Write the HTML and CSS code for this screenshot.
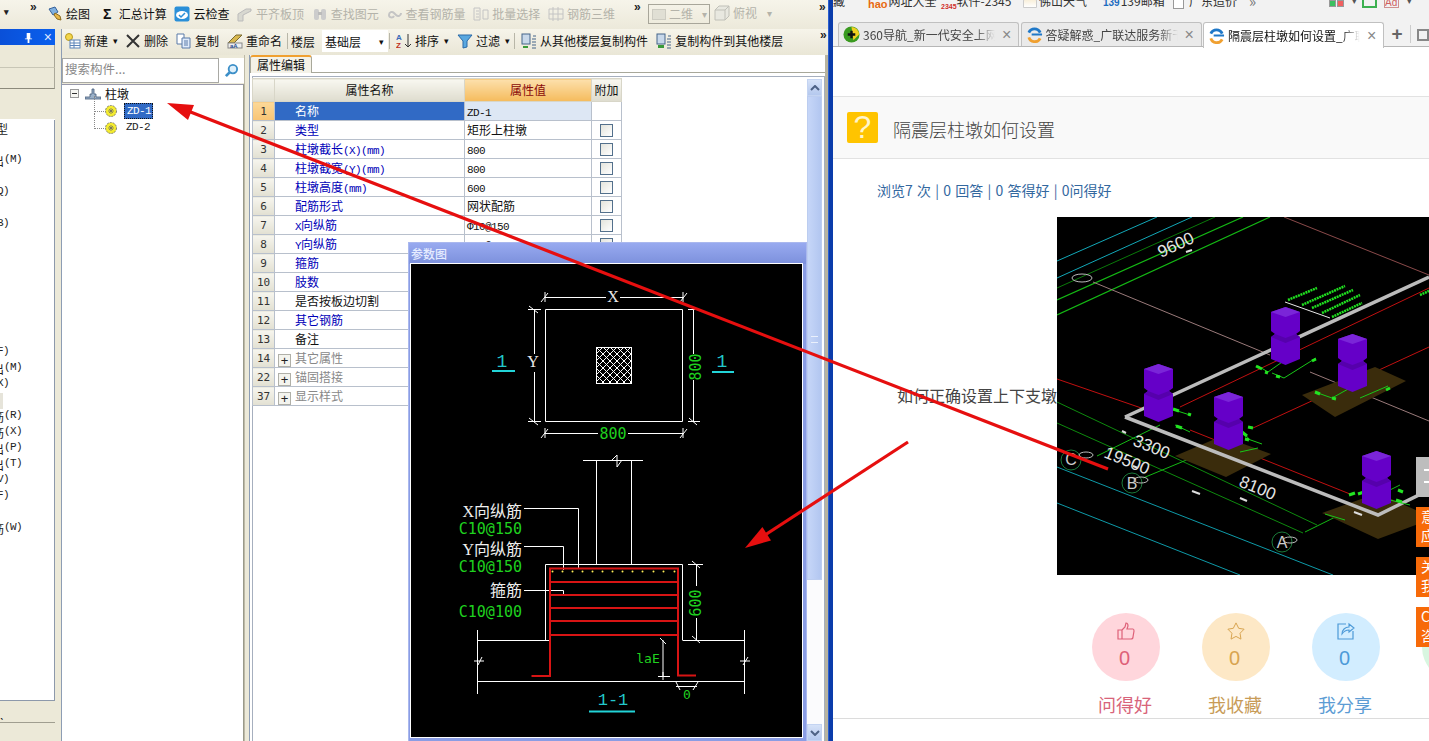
FILE: index.html
```html
<!DOCTYPE html>
<html lang="zh-CN">
<head>
<meta charset="utf-8">
<title>隔震层柱墩如何设置</title>
<link rel="stylesheet" href="styles.css">
</head>
<body>
<div class="desk">
  <section class="app">
    <div class="tb1">
      <span class="drop d0">▾</span><span class="more m0">»</span>
      <span class="it"><svg class="ic" viewBox="0 0 16 16"><path d="M2 3l6-2 3 5-5 3z" fill="#7fb0e0" stroke="#36619a"/><path d="M8 7l5 3 1 4-4-1-3-4z" fill="#e8b84a" stroke="#8a6a20"/></svg>绘图</span>
      <span class="it sig"><b class="sigma">Σ</b>汇总计算</span>
      <span class="it"><svg class="ic" viewBox="0 0 16 16"><rect x="0.5" y="0.5" width="15" height="15" rx="2" fill="#2a8fd8"/><ellipse cx="8" cy="9" rx="6" ry="4" fill="#fff"/><path d="M5 9l2 2 4-4" fill="none" stroke="#2a8fd8" stroke-width="1.5"/></svg>云检查</span>
      <span class="it off"><svg class="ic" viewBox="0 0 16 16"><path d="M1 15V8l8-5 5 0v2l-8 4v6z" fill="#d8d8d0" stroke="#bbb"/></svg>平齐板顶</span>
      <span class="it off"><svg class="ic" viewBox="0 0 16 16"><rect x="2" y="3" width="5" height="11" rx="2" fill="#ccc"/><rect x="9" y="3" width="5" height="11" rx="2" fill="#ccc"/><rect x="6" y="6" width="4" height="3" fill="#bbb"/></svg>查找图元</span>
      <span class="it off"><svg class="ic" viewBox="0 0 16 16"><path d="M2 9c0-3 3-4 5-2l2 2c2 2 5 1 5-2M2 9c0 3 4 3 5 1" fill="none" stroke="#c4c4c4" stroke-width="2"/></svg>查看钢筋量</span>
      <span class="it off"><svg class="ic" viewBox="0 0 16 16"><path d="M1 2h6v12H1zM3 5h3M3 8h3M3 11h3M10 4h5v9h-5z" fill="none" stroke="#c4c4c4"/></svg>批量选择</span>
      <span class="it off"><svg class="ic" viewBox="0 0 16 16"><path d="M1 3h14v10H1zM5 1v14M10 1v14M1 8h14" fill="none" stroke="#c4c4c4"/></svg>钢筋三维</span>
      <span class="more m1">»</span>
      <span class="combo off"><i class="swatch"></i>二维<i class="cd">▾</i></span>
      <span class="it off view"><svg class="ic" viewBox="0 0 16 16"><path d="M1 5l4-4h10v10l-4 4H1zM1 5h10v10M11 5l4-4" fill="#e8e8e0" stroke="#c0c0b8"/></svg>俯视<i class="cd2">▾</i></span>
      <span class="more m2">»</span>
    </div>
    <div class="work">
      <aside class="lcol">
        <div class="lhead"><svg class="pin" viewBox="0 0 10 12"><path d="M3 1h4v6h2v1H6v4H4V8H1V7h2z" fill="#fff"/></svg><span class="lx">×</span></div>
        <div class="lbtn b1"></div>
        <div class="lbtn b2"></div>
        <div class="lhd2"></div>
        <div class="llist">
          <div class="li s8">类型</div><div class="li"></div>
          <div class="li s22">输出<span class="m">(M)</span></div><div class="li"></div>
          <div class="li s9"><span class="m">(Q)</span></div><div class="li"></div>
          <div class="li s9"><span class="m">(B)</span></div>
          <div class="li"></div><div class="li"></div><div class="li"></div><div class="li"></div><div class="li"></div><div class="li"></div><div class="li"></div>
          <div class="li s9"><span class="m">(F)</span></div>
          <div class="li s22">输出<span class="m">(M)</span></div>
          <div class="li s9"><span class="m">(X)</span></div>
          <div class="li"><i class="lmark"></i></div>
          <div class="li s22">钢筋<span class="m">(R)</span></div>
          <div class="li s22">钢筋<span class="m">(X)</span></div>
          <div class="li s22">输出<span class="m">(P)</span></div>
          <div class="li s22">输出<span class="m">(T)</span></div>
          <div class="li s9"><span class="m">(V)</span></div>
          <div class="li s9"><span class="m">(F)</span></div>
          <div class="li"></div>
          <div class="li s22">钢筋<span class="m">(W)</span></div>
        </div>
        <div class="lfoot f1"><span class="fmark">ˎ</span></div>
        <div class="lfoot f2"></div>
      </aside>
      <div class="split s1"></div>
      <div class="rarea">
        <div class="tb2">
          <span class="it"><svg class="ic" viewBox="0 0 16 16"><circle cx="4" cy="4" r="3.5" fill="#f4d64a" stroke="#b89a20"/><rect x="5" y="7" width="10" height="8" fill="#fff" stroke="#5c84b8"/><path d="M5 10h10M5 12.500h10M9 7v8" stroke="#5c84b8" fill="none"/></svg>新建<i class="cd3">▾</i></span>
          <span class="it t-del"><svg class="ic x" viewBox="0 0 14 14"><path d="M1 1l12 12M13 1L1 13" stroke="#333" stroke-width="2"/></svg>删除</span>
          <span class="it"><svg class="ic" viewBox="0 0 16 16"><path d="M1 1h7v10H1z" fill="#fff" stroke="#5a7aa8"/><path d="M6 5h8v10H6z" fill="#dfeafa" stroke="#5a7aa8"/><path d="M8 8h4M8 10h4M8 12h4" stroke="#5a7aa8"/></svg>复制</span>
          <span class="it"><svg class="ic" viewBox="0 0 16 16"><path d="M1 10L9 2l6 0-8 8z" fill="#d8b850" stroke="#7a6a30"/><rect x="1" y="10" width="14" height="5" fill="#eee" stroke="#888"/><text class="abtxt" x="3" y="15">aA</text></svg>重命名</span>
          <i class="vl vl-a"></i>
          <span class="lb">楼层</span>
          <span class="floor">基础层<i class="cd4">▾</i></span>
          <i class="vl vl-b"></i>
          <span class="it"><svg class="ic" viewBox="0 0 16 16"><text class="az a" x="0" y="7">A</text><text class="az z" x="0" y="15">Z</text><path d="M12 1v13M9 11l3 3 3-3" fill="none" stroke="#333"/></svg>排序<i class="cd3">▾</i></span>
          <span class="it"><svg class="ic" viewBox="0 0 16 16"><path d="M1 2h14L10 8v6l-4 1V8z" fill="#5aa8e0" stroke="#2a6aa8"/></svg>过滤<i class="cd3">▾</i></span>
          <i class="vl vl-c"></i>
          <span class="it"><svg class="ic" viewBox="0 0 16 16"><rect x="1" y="1" width="8" height="10" fill="#c8d8ea" stroke="#44658a"/><path d="M2 13h5v2H2z" fill="#3a9a3a"/><path d="M11 6h4M11 9h4M11 12h4M11 15h4M12 3h3" stroke="#44658a"/></svg>从其他楼层复制构件</span>
          <span class="it"><svg class="ic" viewBox="0 0 16 16"><rect x="1" y="1" width="8" height="10" fill="#c8d8ea" stroke="#44658a"/><path d="M2 12h6v3H2z" fill="#3a9a3a"/><path d="M11 6h4M11 9h4M11 12h4M11 15h4M12 3h3" stroke="#44658a"/></svg>复制构件到其他楼层</span>
          <span class="more m3">»</span>
        </div>
        <div class="main">
          <div class="mid">
            <div class="search"><span class="sinput">搜索构件...</span><span class="sbtn"><svg class="mag" viewBox="0 0 16 16"><circle cx="9.500" cy="6.500" r="4.500" fill="#dff0fb" stroke="#3c8fc8" stroke-width="2"/><path d="M6 10l-4 4" stroke="#3c8fc8" stroke-width="3"/></svg></span></div>
            <div class="tree">
              <div class="node root"><i class="minus"></i><svg class="nic" viewBox="0 0 16 12"><path d="M0 11h16v-2H11V6H9V1H7v5H5v3H0z" fill="#9ab0c8" stroke="#445a78" stroke-width=".8"/></svg>柱墩</div>
              <div class="node kid"><i class="dots"></i><svg class="gear" viewBox="0 0 12 12"><circle cx="6" cy="6" r="5.500" fill="#f4ec30" stroke="#666" stroke-width=".8" stroke-dasharray="2 1"/><path d="M3 6h6M6 3v6M4 4l4 4M8 4l-4 4" stroke="#666" stroke-width=".7"/></svg><span class="zd sel">ZD-1</span></div>
              <div class="node kid"><i class="dots"></i><svg class="gear" viewBox="0 0 12 12"><circle cx="6" cy="6" r="5.500" fill="#f4ec30" stroke="#666" stroke-width=".8" stroke-dasharray="2 1"/><path d="M3 6h6M6 3v6M4 4l4 4M8 4l-4 4" stroke="#666" stroke-width=".7"/></svg><span class="zd">ZD-2</span></div>
            </div>
          </div>
          <div class="split s2"></div>
          <div class="props">
            <div class="tabs"><span class="ptab">属性编辑</span></div>
            <div class="pbody">
              <div class="tablewrap">
                <table class="grid">
                  <colgroup><col class="c0"><col class="c1"><col class="c2"><col class="c3"></colgroup>
                  <thead><tr><th class="n"></th><th>属性名称</th><th class="hv">属性值</th><th>附加</th></tr></thead>
                  <tbody>
                    <tr class="cur"><td class="n">1</td><td class="k">名称</td><td class="v"><span class="m">ZD-1</span></td><td></td></tr>
                    <tr><td class="n">2</td><td class="k bl">类型</td><td class="v">矩形上柱墩</td><td><i class="cb"></i></td></tr>
                    <tr><td class="n">3</td><td class="k bl">柱墩截长<span class="m">(X)(mm)</span></td><td class="v"><span class="m">800</span></td><td><i class="cb"></i></td></tr>
                    <tr><td class="n">4</td><td class="k bl">柱墩截宽<span class="m">(Y)(mm)</span></td><td class="v"><span class="m">800</span></td><td><i class="cb"></i></td></tr>
                    <tr><td class="n">5</td><td class="k bl">柱墩高度<span class="m">(mm)</span></td><td class="v"><span class="m">600</span></td><td><i class="cb"></i></td></tr>
                    <tr><td class="n">6</td><td class="k bl">配筋形式</td><td class="v">网状配筋</td><td><i class="cb"></i></td></tr>
                    <tr><td class="n">7</td><td class="k bl"><span class="m">X</span>向纵筋</td><td class="v"><span class="m">Φ10@150</span></td><td><i class="cb"></i></td></tr>
                    <tr><td class="n">8</td><td class="k bl"><span class="m">Y</span>向纵筋</td><td class="v"><span class="m">Φ10@150</span></td><td><i class="cb"></i></td></tr>
                    <tr><td class="n">9</td><td class="k bl">箍筋</td><td class="v"></td><td></td></tr>
                    <tr><td class="n">10</td><td class="k bl">肢数</td><td class="v"></td><td></td></tr>
                    <tr><td class="n">11</td><td class="k">是否按板边切割</td><td class="v"></td><td></td></tr>
                    <tr><td class="n">12</td><td class="k bl">其它钢筋</td><td class="v"></td><td></td></tr>
                    <tr><td class="n">13</td><td class="k">备注</td><td class="v"></td><td></td></tr>
                    <tr><td class="n">14</td><td class="k gr"><i class="plus">+</i>其它属性</td><td class="v"></td><td></td></tr>
                    <tr><td class="n">22</td><td class="k gr"><i class="plus">+</i>锚固搭接</td><td class="v"></td><td></td></tr>
                    <tr><td class="n">37</td><td class="k gr"><i class="plus">+</i>显示样式</td><td class="v"></td><td></td></tr>
                  </tbody>
                </table>
              </div>
              <div class="vbar">
                <span class="vbtn"><svg class="chev" viewBox="0 0 10 6"><path d="M1 5l4-4 4 4" fill="none" stroke="#4d6185" stroke-width="2"/></svg></span>
                <span class="vthumb"><i class="grip"></i></span>
                <span class="vtrack"></span>
                <span class="vbtn"><svg class="chev" viewBox="0 0 10 6"><path d="M1 1l4 4 4-4" fill="none" stroke="#4d6185" stroke-width="2"/></svg></span>
              </div>
            </div>
          </div>
        </div>
      </div>
    </div>
  </section>
  <div class="sep"></div>
  <section class="browser">
    <div class="marks">
      <span class="bm bm0">藏</span>
      <span class="bm bm1"><b class="hao">hao</b>网址大全</span>
      <span class="bm bm2"><b class="n2345">2345</b>软件-2345</span>
      <span class="bm bm3"><i class="cloudic"></i>佛山天气</span>
      <span class="bm bm4"><b class="m139">139</b>139邮箱</span>
      <span class="bm bm5"><i class="pageic"></i>广东造价</span>
      <span class="bm bm6">»</span>
      <span class="tools"><i class="sq g"></i><i class="sq r"></i><i class="tcd">▾</i><i class="book"></i><i class="adbox">Ad</i><i class="tcd">▾</i></span>
    </div>
    <div class="btabs">
      <div class="btab"><svg class="fav" viewBox="0 0 18 18"><circle cx="9" cy="9" r="8.500" fill="#3a9a20"/><path d="M9 1a8 8 0 0 1 8 8l-6 6z" fill="#f0d020"/><path d="M9 5v8M5 9h8" stroke="#111" stroke-width="2.500"/></svg><span class="tt">360导航_新一代安全上网</span><span class="tx">×</span></div>
      <div class="btab"><svg class="fav" viewBox="0 0 18 18"><path d="M3 7a6.500 6.500 0 0 1 12 0" fill="none" stroke="#1f78c8" stroke-width="3"/><path d="M3 12a6.500 6.500 0 0 0 12 1" fill="none" stroke="#f0a030" stroke-width="3"/><path d="M6 9h11" stroke="#1f78c8" stroke-width="2"/></svg><span class="tt">答疑解惑_广联达服务新干</span><span class="tx">×</span></div>
      <div class="btab on"><svg class="fav" viewBox="0 0 18 18"><path d="M3 7a6.500 6.500 0 0 1 12 0" fill="none" stroke="#1f78c8" stroke-width="3"/><path d="M3 12a6.500 6.500 0 0 0 12 1" fill="none" stroke="#f0a030" stroke-width="3"/><path d="M6 9h11" stroke="#1f78c8" stroke-width="2"/></svg><span class="tt">隔震层柱墩如何设置_广联</span><span class="tx">×</span></div>
      <span class="tplus">+</span><i class="tline"></i><i class="tdup"></i>
    </div>
    <div class="page">
      <div class="qband">
        <span class="qic">?</span>
        <h1 class="qtitle">隔震层柱墩如何设置</h1>
      </div>
      <p class="stats">浏览7 次 | 0 回答 | 0 答得好 | 0问得好</p>
      <div class="qbody">
        <p class="qtext">如何正确设置上下支墩</p>
        <svg class="cad" viewBox="1057 217 372 358">
          <defs>
            <g id="pil">
              <path d="M0 24V5L14.500 0 29 5v19L25 27l4 3v22l-14.500 6L0 52V30l4-3z" fill="#6500c8"/>
              <path d="M0 5L14.500 0 29 5 14.500 10z" fill="#7a25d8"/>
              <path d="M0 30l14.500 6L29 30l-4-3-10.500 4L4 27z" fill="#5600ac"/>
            </g>
          </defs>
          <rect x="1057" y="217" width="372" height="358" fill="#000"/>
          <path d="M1057 261L1157 217M1057 278L1192 217" stroke="#12a8b8" fill="none"/>
          <path d="M1057 288L1215 217" stroke="#0a7a0a" fill="none"/>
          <path d="M1057 300L1243 217M1057 315L1270 217" stroke="#14b814" stroke-width="1.200" fill="none"/>
          <path d="M1057 467L1333 575M1057 503L1240 575" stroke="#0e9aa8" fill="none"/>
          <path d="M1057 402L1317 525M1057 423L1303 533" stroke="#0e8a0e" fill="none"/>
          <path d="M1093 282L1270 355M1310 372L1429 421" stroke="#9a7a7a" fill="none"/>
          <path d="M1284 217L1429 275" stroke="#8a4a4a" fill="none"/>
          <path d="M1057 379L1150 411M1190 430L1350 494" stroke="#c01010" fill="none"/>
          <path d="M1180 407L1429 288M1253 428L1429 347" stroke="#c01010" fill="none"/>
          <path d="M1097 456L1160 425M1143 478L1230 442M1305 532L1400 485" stroke="#14b814" fill="none"/>
          <path d="M1302 395L1375 367L1406 381L1335 417zM1175 456L1222 436L1271 454L1226 477zM1322 513L1378 493L1429 516V520L1378 539z" fill="#3a2c0c"/>
          <path d="M1125 417L1378 515L1429 490M1125 417L1429 277" fill="none" stroke="#bcbcbc" stroke-width="3.500"/>
          <path d="M1285 302L1330 318" stroke="#e8e8e8"/>
          <path class="db" d="M1288 300L1317 288M1302 305L1345 286M1312 308L1353 290M1322 313L1360 295M1332 317L1362 303M1420 295L1429 291"/>
          <g class="dg">
            <path d="M1258 366L1268 372L1285 360M1272 373L1284 378L1316 358M1315 392L1332 398L1350 388M1360 398L1388 386M1168 408L1190 415M1175 425L1190 432M1241 430L1250 440M1245 438L1262 444M1240 452L1258 448M1325 514L1345 520M1390 500L1410 505"/>
          </g>
          <path class="db2" d="M1256 366l6 3M1265 372l3 1M1276 376l4 1M1312 361l4-2M1315 392l5 2M1332 398l4 1M1386 390l4-2M1173 409l6 2M1188 414l3 1M1176 426l6 2M1242 432l5 4M1245 439l4 1M1248 427l5 1M1349 495l6-2M1358 494l6-2M1398 490l5 2M1396 500l6 2"/>
          <use href="#pil" x="1271" y="307"/>
          <use href="#pil" x="1338" y="334"/>
          <use href="#pil" x="1144" y="364"/>
          <use href="#pil" x="1214" y="392"/>
          <use href="#pil" x="1362" y="451"/>
          <g class="gc">
            <circle cx="1071" cy="460" r="10"/><circle cx="1132" cy="483" r="10"/><circle cx="1282" cy="542" r="10"/>
          </g>
          <g class="wc">
            <ellipse cx="1082" cy="278" rx="10" ry="4"/><ellipse cx="1141" cy="480" rx="7" ry="3"/><ellipse cx="1290" cy="540" rx="7" ry="3"/><ellipse cx="1086" cy="455" rx="7" ry="3"/>
          </g>
          <text class="gl" x="1071" y="465" text-anchor="middle">C</text>
          <text class="gl" x="1132" y="489" text-anchor="middle">B</text>
          <text class="gl" x="1282" y="548" text-anchor="middle">A</text>
          <text class="cadt" transform="translate(1161 258) rotate(-25)">9600</text>
          <text class="cadt" transform="translate(1132 445) rotate(22)">3300</text>
          <text class="cadt" transform="translate(1103 457) rotate(22)">19500</text>
          <text class="cadt" transform="translate(1238 486) rotate(22)">8100</text>
          <path d="M1122 431l4 2M1192 491l8 3M1240 498l7 3M1354 512l8 3M1133 466l5 2M1186 252l6-2" stroke="#ddd" stroke-width="2"/>
        </svg>
      </div>
      <div class="acts">
        <div class="act pk">
          <div class="circle"><svg class="aic" viewBox="0 0 18 18"><path d="M1 8h4v9H1zM5 8l3-3 1-4c2 0 2 2 2 3l-1 3h6c1 0 1 1 1 2l-1 6c0 1-1 2-2 2H5" fill="none" stroke="currentColor" stroke-width="1.200"/></svg><span class="cnt">0</span></div>
          <span class="lab">问得好</span>
        </div>
        <div class="act or">
          <div class="circle"><svg class="aic" viewBox="0 0 20 20"><path d="M10 1l3 6 6 1-4.500 4.500 1 6.500-5.500-3-5.500 3 1-6.500L1 8l6-1z" fill="none" stroke="currentColor" stroke-width="1.100"/></svg><span class="cnt">0</span></div>
          <span class="lab">我收藏</span>
        </div>
        <div class="act bu">
          <div class="circle"><svg class="aic" viewBox="0 0 18 18"><path d="M9 2H1v15h15V9" fill="none" stroke="currentColor" stroke-width="1.200"/><path d="M5 12c0-4 3-7 7-7V2l5 4-5 4V8c-3 0-5 1-7 4z" fill="none" stroke="currentColor" stroke-width="1.100"/></svg><span class="cnt">0</span></div>
          <span class="lab">我分享</span>
        </div>
        <div class="act gn">
          <div class="circle"></div>
          <span class="lab">我</span>
        </div>
      </div>
      <div class="rule"></div>
    </div>
  </section>

  <div class="dialog">
    <div class="dtitle">参数图</div>
    <svg class="dcanvas" viewBox="411 264 391 473">
      <defs>
        <pattern id="hat" width="7" height="7" patternUnits="userSpaceOnUse" x="596" y="347">
          <path d="M0 0L7 7M7 0L0 7" stroke="#fff" stroke-width="1"/>
        </pattern>
      </defs>
      <g class="wl">
        <path d="M545.500 309.500H682.500V421.500H545.500Z"/>
        <path d="M545 297.500H606M620 297.500H683M545 292V302M683 292V302M541 302L548 293M680 302L687 293"/>
        <path d="M534.500 309V354M534.500 372V421M528 309.500H541M528 421.500H541M529 306L538 313M529 418L538 425"/>
        <path d="M693.500 309V354M693.500 380V421M688 309.500H700M688 421.500H700M689 418L697 425"/>
        <path d="M545 433.500H598M628 433.500H683M545 428V438M683 428V438M541 438L548 429M680 438L687 429"/>
        <rect x="596.500" y="347.500" width="35" height="36" fill="url(#hat)"/>
        <path d="M583 460.500H643M596.500 460.500V564.500M631.500 460.500V564.500M612 460L617 455V467L622 460"/>
        <path d="M545.500 564.500H682.500M545.500 564.500V640.500M682.500 564.500V640.500"/>
        <path d="M477 640.500H550M683 640.500H744M477 681.500H744M477.500 630V694M744.500 630V694"/>
        <path d="M474 661H484M478 665L482 657M740 661H750M743 665L748 657"/>
        <path d="M524 508.500H578.500V568M524 546.500H563.500V570M524 590.500H563.500V595"/>
        <path d="M696.500 564V586M696.500 618V640M688 564.500H703M692 561L700 568M692 636L700 643"/>
        <path d="M663 640V676M658 676.500H670M663 672V680M660 638L666 644"/>
        <path d="M676 686.500H697M676 682L680 690M693 690L698 682"/>
      </g>
      <path class="rb" d="M531.500 676H550V568.500H678V675.500H696"/>
      <path class="rb" d="M550 582H678M550 595H678M550 608H678M550 621H678M550 635H678"/>
      <g class="dots2">
        <circle cx="552.500" cy="571.500" r="1"/><circle cx="562.500" cy="571.500" r="1"/><circle cx="572.500" cy="571.500" r="1"/><circle cx="582.500" cy="571.500" r="1"/><circle cx="592.500" cy="571.500" r="1"/><circle cx="602.500" cy="571.500" r="1"/><circle cx="612.500" cy="571.500" r="1"/><circle cx="622.500" cy="571.500" r="1"/><circle cx="632.500" cy="571.500" r="1"/><circle cx="642.500" cy="571.500" r="1"/><circle cx="653.500" cy="571.500" r="1"/><circle cx="663.500" cy="571.500" r="1"/><circle cx="674.500" cy="571.500" r="1"/>
      </g>
      <text class="tw" x="613" y="302" text-anchor="middle">X</text>
      <text class="tw" x="533" y="367" text-anchor="middle">Y</text>
      <text class="tg" x="613" y="439" text-anchor="middle">800</text>
      <text class="tg" transform="translate(701 367) rotate(-90)" text-anchor="middle">800</text>
      <text class="tg" transform="translate(701 603) rotate(-90)" text-anchor="middle">600</text>
      <text class="tc" x="502" y="367" text-anchor="middle">1</text>
      <text class="tc" x="722" y="367" text-anchor="middle">1</text>
      <path class="cl" d="M492 371H515M712 372H734M589 711.500H635"/>
      <text class="tc s11" x="613" y="705" text-anchor="middle">1-1</text>
      <text class="tz" x="522" y="517" text-anchor="end">X向纵筋</text>
      <text class="tg" x="522" y="534" text-anchor="end">C10@150</text>
      <text class="tz" x="522" y="555" text-anchor="end">Y向纵筋</text>
      <text class="tg" x="522" y="572" text-anchor="end">C10@150</text>
      <text class="tz" x="522" y="596" text-anchor="end">箍筋</text>
      <text class="tg" x="522" y="617" text-anchor="end">C10@100</text>
      <text class="tg sm" x="648" y="663" text-anchor="middle">laE</text>
      <text class="tg sm" x="687" y="699" text-anchor="middle">0</text>
    </svg>
  </div>

  <div class="floats">
    <div class="fl gy"><i></i><i></i></div>
    <div class="fl oj">意<br>应</div>
    <div class="fl oj">关<br>我</div>
    <div class="fl oj">C<br>咨</div>
  </div>

  <svg class="arrows" viewBox="0 0 1429 741">
    <path d="M1108 469L188 111" stroke="#e60f0f" stroke-width="3.200" fill="none"/>
    <path d="M167 103L194 105L188 120Z" fill="#e60f0f"/>
    <path d="M908 442L765 535" stroke="#e60f0f" stroke-width="3.200" fill="none"/>
    <path d="M745 548L771 540.500L762.400 527Z" fill="#e60f0f"/>
  </svg>
</div>
</body>
</html>
```
FILE: styles.css
```css
* { box-sizing: border-box; }
html, body { margin: 0; padding: 0; background: #fff; }
body { font: 12px "Noto Sans CJK SC", "Liberation Sans", sans-serif; color: #111; }
i { font-style: normal; display: inline-block; }
.desk { position: relative; display: flex; width: 1429px; height: 741px; overflow: hidden; }
.m { font: 11px "Liberation Mono", "DejaVu Sans Mono", monospace; letter-spacing: -.6px; }

/* left application */
.app { width: 828px; display: flex; flex-direction: column; background: #ece9d8; }
.tb1 { height: 29px; display: flex; align-items: center; padding: 0 0 2px 47px; gap: 7.700px; position: relative; background: linear-gradient(#f6f4ea, #ece9da); line-height: 16px; }
.it { display: flex; align-items: center; gap: 3px; white-space: nowrap; line-height: 16px; }
.ic { width: 16px; height: 16px; flex: none; }
.ic.x { width: 14px; height: 14px; margin-right: 1px; }
.off { color: #b4b3aa; }
.sig { margin-left: 3px; gap: 5px; }
.sigma { font: bold 14px "Liberation Sans", sans-serif; width: 13px; text-align: center; }
.drop, .more { position: absolute; font: bold 12px "Liberation Sans", sans-serif; color: #222; }
.d0 { left: 4px; top: 7px; font-size: 9px; }
.m0 { left: 30px; top: 0; }
.m1 { left: 634px; top: 0; }
.m2 { left: 819px; top: 0; }
.m3 { left: 758px; top: -1px; }
.combo { position: absolute; left: 648px; top: 4px; width: 62px; height: 20px; border: 1px solid #a8a69a; display: flex; align-items: center; padding-left: 3px; gap: 3px; }
.swatch { width: 14px; height: 11px; background: #e0dfd4; border: 1px solid #cdccc2; }
.cd { margin-left: 6px; font-size: 10px; }
.view { position: absolute; left: 714px; top: 5px; }
.cd2 { margin-left: 7px; font-size: 10px; }
.work { flex: 1; display: flex; min-height: 0; }

.lcol { width: 55px; display: flex; flex-direction: column; overflow: hidden; }
.lhead { height: 16px; background: linear-gradient(90deg, #0a50d8, #0a60ee); display: flex; align-items: center; justify-content: flex-end; gap: 11px; padding-right: 3px; }
.pin { width: 9px; height: 11px; }
.lx { color: #dfe8ff; font: 14px "Liberation Sans", sans-serif; line-height: 14px; }
.lbtn { background: #ece9d8; border-right: 1px solid #aaa89a; border-bottom: 1px solid #8c8a7c; }
.b1 { height: 23px; border-bottom-color: #c8c6b6; }
.b2 { height: 21px; }
.lhd2 { height: 28px; margin-top: 3px; background: #ece9d8; border-bottom: 1px solid #fff; }
.llist { flex: 1; min-height: 0; background: #fff; border-right: 1px solid #8d99ab; border-bottom: 1px solid #8d99ab; padding-top: 1px; }
.li { height: 16px; line-height: 16px; overflow: hidden; white-space: nowrap; display: flex; justify-content: flex-end; color: #222; width: 0; }
.s8 { width: 8px; }
.s9 { width: 9px; }
.s22 { width: 22px; }
.lmark { width: 3px; height: 16px; background: #e6e4da; }
.li:has(.lmark) { width: 3px; }
.lfoot { background: #ece9d8; position: relative; }
.f1 { height: 22px; border-bottom: 1px solid #a09e90; }
.f2 { height: 18px; }
.fmark { position: absolute; left: 0; top: 2px; font-size: 12px; }
.split { background: #ece9d8; flex: none; }
.s1 { width: 7px; border-right: 1px solid #8d9db4; }
.rarea { flex: 1; display: flex; flex-direction: column; min-width: 0; }
.tb2 { height: 26px; display: flex; align-items: center; padding: 0 0 2px 3px; gap: 8px; position: relative; background: linear-gradient(#f6f4ea, #e9e6d6); flex: none; }
.tb2 .it { gap: 3px; }
.cd3 { margin-left: 2px; font-size: 9px; }
.vl { width: 1px; height: 16px; background: #b8b6a8; flex: none; }
.vl-a { margin-left: -3px; }
.lb { margin-left: -5px; }
.floor { width: 66px; height: 22px; background: #fff; display: flex; align-items: center; padding-left: 3px; margin-left: -1px; }
.vl-b { margin-left: -7px; margin-right: -2px; }
.vl-c { margin-left: -4px; margin-right: -2px; }
.cd4 { margin-left: 18px; font-size: 9px; }
.abtxt { font: bold 6px "Liberation Sans", sans-serif; fill: #2a4a90; }
.az { font: bold 8px "Liberation Sans", sans-serif; }
.az.a { fill: #3a6ab8; }
.az.z { fill: #c03020; }
.main { flex: 1; display: flex; min-height: 0; }
.mid { width: 182px; display: flex; flex-direction: column; flex: none; background: #ece9d8; }
.search { height: 29px; padding-top: 3px; display: flex; flex: none; }
.sinput { width: 157px; height: 25px; background: #fff; border: 1px solid #a9a9a4; color: #888; line-height: 20px; padding-left: 2px; font-size: 12.500px; }
.sbtn { width: 25px; height: 25px; background: #fff; display: flex; align-items: center; justify-content: center; }
.mag { width: 15px; height: 15px; }
.tree { flex: 1; background: #fff; border-top: 1px solid #99a; border-right: 1px solid #9a9a8a; position: relative; }
.node { display: flex; align-items: center; height: 16.500px; white-space: nowrap; }
.root { padding-left: 8px; height: 17.500px; line-height: 14px; }
.minus { width: 9px; height: 9px; border: 1px solid #999; background: linear-gradient(90deg, transparent 1px, #333 1px, #333 6px, transparent 6px) center / 100% 1px no-repeat #f6f6f2; }
.nic { width: 16px; height: 12px; margin: 0 4px 0 6px; }
.kid { padding-left: 32px; height: 17px; }
.dots { width: 10px; height: 16px; border-left: 1px dotted #888; border-bottom: 1px dotted #888; margin-top: -15px; }
.gear { width: 12px; height: 12px; margin-left: 1px; }
.zd { font: 11px "Liberation Mono", monospace; letter-spacing: -.6px; margin-left: 7px; width: 29px; height: 16px; line-height: 14px; padding-left: 2px; color: #222; }
.sel { background: #316ac5; color: #fff; border: 1px dotted #111; }
.s2 { width: 6px; border-left: 1px solid #bdb9a6; border-right: 1px solid #8d9db4; }
.props { flex: 1; display: flex; flex-direction: column; min-width: 0; background: #fff; border-right: 3px solid #b8b4a0; }
.tabs { height: 18px; border-bottom: 1px solid #a8a89a; flex: none; position: relative; }
.ptab { position: absolute; left: 0; top: 0; width: 62px; height: 18px; background: #f4f2e8; border: 1px solid #a8a89a; border-top: 2px solid #f0a030; border-bottom: 0; border-radius: 3px 3px 0 0; text-align: center; line-height: 15px; }
.pbody { flex: 1; min-height: 0; display: flex; margin: 3px 0 0 2px; border: 1px solid #a6afbe; border-bottom: 0; }
.tablewrap { flex: 1; min-width: 0; padding-top: 1px; }
.grid { border-collapse: collapse; table-layout: fixed; width: 369px; margin-left: -1px; }
.c0 { width: 22px; }
.c1 { width: 190px; }
.c2 { width: 127px; }
.c3 { width: 30px; }
.grid th, .grid td { height: 19px; padding: 0; border: 1px solid #b8c0cc; font-weight: 400; white-space: nowrap; overflow: hidden; line-height: 16px; }
.grid thead th { height: 23px; background: linear-gradient(#f8f7f0, #dedcce); border-color: #d8d6c8; text-align: center; }
.grid th.hv { background: linear-gradient(#fce0ac, #f5bb5c); color: #8a0a0a; }
.grid td.n { background: linear-gradient(#f6f5ee, #e2e0d2); text-align: center; color: #333; font: 11px "DejaVu Sans Mono", monospace; }
.k { padding-left: 20px !important; }
.bl { color: #0000b8; }
.gr { color: #888; padding-left: 3px !important; }
.v { padding-left: 2px !important; }
.plus { width: 13px; height: 13px; border: 1px solid #b0b0a8; background: #f4f4ee; color: #222; text-align: center; margin-right: 4px; vertical-align: -2px; font: 13px/11px "Liberation Sans", sans-serif; }
.cur td.k { background: #316ac5; color: #fff; }
.cur td.n { background: linear-gradient(#fcd898, #f8c474); }
.cur td.v { background: #dde7f4; }
.cb { display: block; width: 13px; height: 13px; margin: 0 auto; border: 1px solid #53708c; background: linear-gradient(135deg, #e4e4dc, #fff); }
.vbar { width: 15px; margin-right: 2px; margin-top: 2px; display: flex; flex-direction: column; flex: none; }
.vbtn { height: 17px; background: linear-gradient(#d6e2f8, #b4c8ee); border: 1px solid #c4d4f2; display: flex; align-items: center; justify-content: center; flex: none; }
.chev { width: 10px; height: 6px; }
.vthumb { height: 484px; background: linear-gradient(90deg, #c6d6f8, #b2c6f0); border: 1px solid #bccdf0; flex: none; position: relative; }
.grip { position: absolute; left: 3px; top: 239px; width: 7px; height: 7px; border-top: 1px solid #eaf0fc; border-bottom: 1px solid #eaf0fc; }
.vtrack { flex: 1; background: #fbfbfd; }
.sep { width: 5px; flex: none; background: #0b3cab; border-left: 1px solid #2b5fd0; }

/* browser */
.browser { flex: 1; min-width: 0; display: flex; flex-direction: column; background: #fff; }
.marks { height: 20px; background: #f2f2f2; display: flex; position: relative; overflow: hidden; color: #333; font-size: 12px; line-height: 14px; flex: none; }
.bm { position: absolute; top: -6px; white-space: nowrap; display: flex; align-items: flex-start; }
.bm0 { left: 0; }
.bm1 { left: 35px; gap: 1px; }
.hao { color: #e86a10; font: bold 11px/11px "Liberation Sans", sans-serif; margin-top: 5px; }
.bm2 { left: 108px; }
.n2345 { color: #d0302a; font: bold 7px/8px "Liberation Sans", sans-serif; margin-top: 9px; }
.bm3 { left: 190px; gap: 2px; }
.cloudic { width: 14px; height: 14px; margin-top: 0; background: linear-gradient(#f4e4c0, #fff); border: 1px solid #ccc; border-radius: 50% 50% 0 0; }
.bm4 { left: 270px; gap: 0; }
.m139 { color: #1c6cc0; font: bold 10px/10px "Liberation Sans", sans-serif; margin: 4px 1px 0 0; }
.bm5 { left: 340px; gap: 5px; }
.pageic { width: 11px; height: 15px; margin-top: 0; border: 1px solid #999; background: #fff; }
.bm6 { left: 416px; color: #777; font-size: 15px; }
.tools { position: absolute; left: 496px; top: 0; display: flex; gap: 1px; align-items: flex-start; }
.sq { width: 7px; height: 7px; margin-top: 0; border: 1px solid #999; }
.sq.g { background: #3cc060; }
.sq.r { background: #f06060; }
.tcd { font-size: 9px; margin: -6px 4px 0 7px; color: #555; }
.book { width: 15px; height: 8px; border: 2px solid #3cb050; border-top: 0; }
.adbox { width: 15px; height: 8px; border: 1px solid #d09090; border-top: 0; color: #d06060; font: 10px/6px "Liberation Sans", sans-serif; margin-left: 6px; overflow: hidden; }
.btabs { height: 27px; display: flex; background: #f2f2f2; border-bottom: 1px solid #b6b6b6; padding: 2px 0 0 5px; gap: 1.500px; align-items: stretch; position: relative; flex: none; }
.btab { width: 181px; flex: none; background: #eaeaea; border: 1px solid #c0c0c0; border-bottom: 0; border-radius: 3px 3px 0 0; display: flex; align-items: center; padding-left: 4px; overflow: hidden; font-size: 12px; color: #444; }
.btab.on { background: #fff; color: #111; height: 26px; }
.fav { width: 17px; height: 17px; flex: none; margin-right: 3px; }
.tt { flex: none; width: 132px; overflow: hidden; white-space: nowrap; -webkit-mask-image: linear-gradient(90deg, #000 85%, transparent); mask-image: linear-gradient(90deg, #000 85%, transparent); }
.tx { margin-left: 7px; color: #888; font: 16px "Liberation Sans", sans-serif; }
.tplus { margin-left: 6px; color: #666; font: bold 19px/24px "Liberation Sans", sans-serif; }
.tline { width: 1px; height: 18px; background: #ccc; margin: 3px 0 0 6px; }
.tdup { width: 12px; height: 12px; border: 2px solid #888; margin: 7px 0 0 4px; }
.page { flex: 1; min-height: 0; display: flex; flex-direction: column; }
.qband { margin-top: 49px; height: 63px; background: #f9f9f9; border-top: 1px solid #e2e2e2; border-bottom: 1px solid #e2e2e2; display: flex; align-items: center; padding-left: 14px; flex: none; }
.qic { width: 31px; height: 31px; border-radius: 2px; background: #ffc400; color: #fff5cc; font: 32px/31px "Liberation Sans", sans-serif; text-align: center; }
.qtitle { margin: 3px 0 0 15px; font-size: 18px; font-weight: 300; color: #444; }
.stats { margin: 21px 0 0 44px; font-size: 14px; line-height: 20px; color: #33689f; height: 20px; flex: none; word-spacing: 1.100px; }
.qbody { display: flex; margin: 17px 0 0 64px; flex: none; height: 358px; align-items: flex-start; }
.qtext { margin: 168px 0 0 0; width: 160px; height: 24px; font-size: 16px; line-height: 20px; color: #444; white-space: nowrap; overflow: hidden; flex: none; }
.cad { width: 372px; height: 358px; flex: none; }
.dg { fill: none; stroke: #18c818; stroke-width: 1; }
.db { fill: none; stroke: #20e020; stroke-width: 2.500; stroke-dasharray: 2 .7; }
.db2 { fill: none; stroke: #22e422; stroke-width: 3; }
.gc { fill: none; stroke: #1a7a3a; }
.wc { fill: none; stroke: #bbb; }
.gl { font: 16px "Liberation Sans", sans-serif; fill: #ccc; }
.cadt { font: 17px "Liberation Sans", sans-serif; fill: #e4e4e4; }
.acts { display: flex; margin: 38px 0 0 238px; flex: none; }
.act { width: 110px; flex: none; display: flex; flex-direction: column; align-items: center; }
.circle { width: 68px; height: 68px; border-radius: 50%; display: flex; flex-direction: column; align-items: center; padding-top: 9px; }
.aic { width: 18px; height: 18px; }
.cnt { font: 20px/24px "Liberation Sans", sans-serif; margin: 6px 3px 0 0; }
.lab { font-size: 18px; line-height: 26px; margin: 10px 2px 0 0; white-space: nowrap; }
.pk .circle { background: #ffd6dc; color: #de6078; }
.pk .lab { color: #d8647a; }
.or .circle { background: #fde8c6; color: #d8a450; }
.or .lab { color: #c89c58; }
.bu .circle { background: #d2edff; color: #4d9ad8; }
.bu .lab { color: #5c9cd4; }
.gn .circle { background: #d8f6e0; }
.gn .lab { color: #c89c58; }
.rule { height: 1px; margin-top: 1px; background: #dcdcdc; flex: none; }

/* floating dialog */
.dialog { position: absolute; left: 408px; top: 242px; width: 399px; height: 505px; background: #8a9de4; border: 1px solid #aab8ee; padding: 0 4px 0 2px; display: flex; flex-direction: column; }
.dtitle { height: 21px; flex: none; color: #e6ecff; font-size: 12px; font-weight: 500; line-height: 22px; background: linear-gradient(#98aaf0, #7c90dc); margin: 0 -4px 0 -2px; padding-left: 2px; }
.dcanvas { width: 391px; height: 473px; background: #000; outline: 1px solid #fff; flex: none; }
.wl { fill: none; stroke: #fff; stroke-width: 1; }
.rb { fill: none; stroke: #d81414; stroke-width: 2; }
.dots2 { fill: #ffee55; }
.cl { fill: none; stroke: #22d4d8; stroke-width: 2; }
.tw { font: 16px "Liberation Serif", serif; fill: #e8e8e8; }
.tg { font: 15px "DejaVu Sans Mono", monospace; fill: #1fd01f; }
.tg.sm { font-size: 13px; }
.tc { font: 18px "Liberation Mono", monospace; fill: #22c8cc; }
.s11 { font-size: 17px; }
.tz { font: 16px "Liberation Serif", "Noto Sans CJK SC", serif; fill: #efefef; }

.floats { position: absolute; left: 1416px; top: 457px; width: 13px; display: flex; flex-direction: column; gap: 10px; overflow: hidden; }
.fl { width: 30px; height: 40px; color: #fff; font-size: 14px; line-height: 19px; padding-left: 5px; }
.gy { background: #bdbdbd; position: relative; }
.gy i { position: absolute; left: 8px; width: 5px; height: 2px; background: #fff; }
.gy i:first-child { top: 12px; }
.gy i:last-child { top: 24px; }
.oj { background: #f76a08; }
.arrows { position: absolute; left: 0; top: 0; width: 1429px; height: 741px; pointer-events: none; }
```
